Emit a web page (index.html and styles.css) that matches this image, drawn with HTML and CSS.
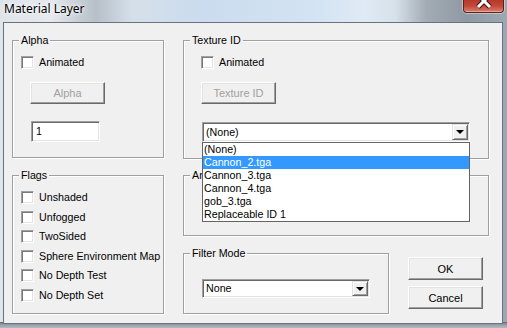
FILE: index.html
```html
<!DOCTYPE html>
<html lang="en">
<head>
    <meta charset="UTF-8">
    <title>Material Layer</title>
    <link rel="stylesheet" href="styles.css">
</head>
<body>
    <div class="window">
        <div class="titlebar">
            <span class="title">Material Layer</span>
            <div class="close">
                <svg width="40" height="13" viewBox="0 0 40 13">
                    <path d="M14 7 L26 -5 M26 7 L14 -5" stroke="#3b1410" stroke-width="5" fill="none"/>
                    <path d="M14 7 L26 -5 M26 7 L14 -5" stroke="#fff" stroke-width="3" fill="none"/>
                </svg>
            </div>
        </div>
        <div class="client">
            <div class="col-left">
                <div class="group alpha">
                    <span class="group-label">Alpha</span>
                    <label class="check"><span class="box"></span>Animated</label>
                    <button class="btn disabled alpha-btn">Alpha</button>
                    <div class="textbox">1</div>
                </div>
                <div class="group flags">
                    <span class="group-label">Flags</span>
                    <div class="flag-list">
                        <label class="check"><span class="box"></span>Unshaded</label>
                        <label class="check"><span class="box"></span>Unfogged</label>
                        <label class="check"><span class="box"></span>TwoSided</label>
                        <label class="check"><span class="box"></span>Sphere Environment Map</label>
                        <label class="check"><span class="box"></span>No Depth Test</label>
                        <label class="check"><span class="box"></span>No Depth Set</label>
                    </div>
                </div>
            </div>
            <div class="col-right">
                <div class="group texture">
                    <span class="group-label">Texture ID</span>
                    <label class="check"><span class="box"></span>Animated</label>
                    <button class="btn disabled texture-btn">Texture ID</button>
                    <div class="combo texture-combo">
                        <span class="combo-value">(None)</span>
                        <span class="combo-arrow"></span>
                        <ul class="combo-list">
                            <li>(None)</li>
                            <li class="selected">Cannon_2.tga</li>
                            <li>Cannon_3.tga</li>
                            <li>Cannon_4.tga</li>
                            <li>gob_3.tga</li>
                            <li>Replaceable ID 1</li>
                        </ul>
                    </div>
                </div>
                <div class="group anim">
                    <span class="group-label">An</span>
                </div>
                <div class="bottom-row">
                    <div class="group filter">
                        <span class="group-label">Filter Mode</span>
                        <div class="combo filter-combo">
                            <span class="combo-value">None</span>
                            <span class="combo-arrow"></span>
                        </div>
                    </div>
                    <div class="buttons">
                        <button class="btn">OK</button>
                        <button class="btn">Cancel</button>
                    </div>
                </div>
            </div>
        </div>
    </div>
</body>
</html>
```

FILE: styles.css
```css
* {
    box-sizing: border-box;
}
body {
    margin: 0;
    padding: 0;
    font-family: "Liberation Sans", Arial, sans-serif;
    font-size: 10.7px;
    color: #000;
}
.window {
    width: 507px;
    height: 328px;
    overflow: hidden;
    background:
        linear-gradient(to bottom, transparent 0, transparent 322px, #5b6570 322px, #8e979f 324px, #b3bac1 328px),
        linear-gradient(to right, #dfe4e9 0, #e6eaee 10%, #c9d0d7 15%, #b7c0c9 19%, #d5dfe9 26%, #cadcee 40%, #d3e3f3 62%, #e0eaf4 72%, #d7e1ea 78%, #a3acb5 84%, #8f99a3 92%, #9ea8b2 100%);
}
.titlebar {
    height: 21px;
    display: flex;
    justify-content: space-between;
    align-items: flex-start;
}
.title {
    font-family: "Noto Sans", "Open Sans", sans-serif;
    font-size: 12px;
    line-height: 18px;
    padding-left: 4px;
    color: #000;
    text-shadow: 0 0 6px #fff, 0 0 3px #fff;
}
.close {
    width: 41px;
    height: 13px;
    margin-right: 3px;
    border: 1px solid #5e2119;
    border-top: none;
    border-radius: 0 0 4px 4px;
    background: linear-gradient(to bottom, #b5392b 0, #c4483a 50%, #d9806f 100%);
    box-shadow: inset 0 -1px 0 rgba(255, 255, 255, 0.35), 0 0 0 1px rgba(255, 255, 255, 0.4);
    overflow: hidden;
}
.close svg {
    display: block;
}
.client {
    margin: 1px 4px 0 3px;
    height: 302px;
    background-color: #f0f0f0;
    border: 1px solid #67737f;
    padding: 17px 0 0 8px;
    display: flex;
    gap: 19px;
}
.col-left {
    width: 152px;
    display: flex;
    flex-direction: column;
    gap: 17px;
}
.col-right {
    width: 306px;
    display: flex;
    flex-direction: column;
}
.group {
    position: relative;
    border: 1px solid #a0a0a0;
    box-shadow: 1px 1px 0 #fff, inset 1px 1px 0 #fff;
}
.group-label {
    position: absolute;
    top: -7px;
    left: 6px;
    padding: 0 2px;
    line-height: 13px;
    background-color: #f0f0f0;
}
.check {
    display: flex;
    align-items: center;
    height: 13px;
    line-height: 13px;
    white-space: nowrap;
}
.box {
    width: 13px;
    height: 13px;
    margin-right: 5px;
    background-color: #fff;
    border: 1px solid;
    border-color: #a0a0a0 #fff #fff #a0a0a0;
    box-shadow: inset 1px 1px 0 #7a7a7a, inset -1px -1px 0 #e3e3e3;
    flex-shrink: 0;
}
.btn {
    display: block;
    width: 75px;
    height: 23px;
    padding: 0;
    font-family: inherit;
    font-size: 11px;
    color: #000;
    background-color: #f0f0f0;
    border: 1px solid;
    border-color: #fff #696969 #696969 #fff;
    box-shadow: inset -1px -1px 0 #a0a0a0, inset 1px 1px 0 #e3e3e3;
}
.btn.disabled {
    color: #a0a0a0;
    height: 22px;
}
.textbox {
    width: 69px;
    height: 21px;
    padding: 3px 0 0 4px;
    background-color: #fff;
    border: 1px solid;
    border-color: #a0a0a0 #fff #fff #a0a0a0;
    box-shadow: inset 1px 1px 0 #696969, inset -1px -1px 0 #e3e3e3;
}

/* Alpha */
.alpha {
    height: 118px;
    padding: 15px 0 0 8px;
}
.alpha-btn {
    margin: 13px 0 0 9px;
}
.alpha .textbox {
    margin: 17px 0 0 10px;
}

/* Flags */
.flags {
    height: 139px;
    padding: 15px 0 0 8px;
}
.flag-list {
    display: flex;
    flex-direction: column;
    gap: 6.5px;
}

/* Texture ID */
.texture {
    height: 119px;
    padding: 15px 0 0 17px;
}
.texture-btn {
    margin-top: 13px;
}
.combo {
    position: relative;
    display: flex;
    background-color: #fff;
    border: 1px solid;
    border-color: #a0a0a0 #fff #fff #a0a0a0;
    box-shadow: inset 1px 1px 0 #696969, inset -1px -1px 0 #e3e3e3;
    padding: 1px;
}
.combo-value {
    flex: 1;
    padding: 0 0 0 2px;
    line-height: 16px;
}
.combo-arrow {
    width: 16px;
    height: 16px;
    position: relative;
    background-color: #f0f0f0;
    border: 1px solid;
    border-color: #e3e3e3 #696969 #696969 #e3e3e3;
    box-shadow: inset 1px 1px 0 #fff, inset -1px -1px 0 #a0a0a0;
}
.combo-arrow::after {
    content: "";
    position: absolute;
    left: 3px;
    top: 5px;
    border-left: 4px solid transparent;
    border-right: 4px solid transparent;
    border-top: 4px solid #000;
}
.texture-combo {
    width: 268px;
    height: 20px;
    margin: 18px 0 0 1px;
}
.combo-list {
    position: absolute;
    top: 19px;
    left: -1px;
    width: 268px;
    margin: 0;
    padding: 0;
    list-style: none;
    background-color: #fff;
    border: 1px solid #646464;
    z-index: 10;
}
.combo-list li {
    height: 13px;
    line-height: 13px;
    padding-left: 1px;
}
.combo-list li.selected {
    background-color: #3399ff;
    color: #fff;
}

/* Animation */
.anim {
    height: 61px;
    margin-top: 16px;
}

/* Filter mode + dialog buttons */
.bottom-row {
    display: flex;
    height: 61px;
    margin-top: 17px;
}
.filter {
    width: 206px;
    height: 61px;
    padding: 25px 0 0 18px;
}
.filter-combo {
    width: 168px;
    height: 19px;
}
.filter-combo .combo-arrow {
    height: 15px;
}
.filter-combo .combo-value {
    line-height: 15px;
}
.buttons {
    margin: 4px 0 0 19px;
    display: flex;
    flex-direction: column;
    gap: 6px;
}
```
